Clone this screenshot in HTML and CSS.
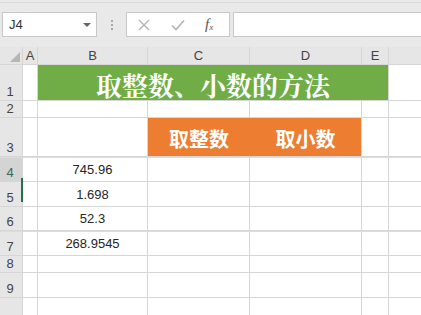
FILE: index.html
```html
<!DOCTYPE html>
<html lang="zh-CN">
  <head>
    <meta charset="UTF-8">
    <title>取整数、小数的方法</title>
    <link rel="stylesheet" href="styles.css">
  </head>
  <body>
    <div class="formula-bar">
      <div class="name-box"><span>J4</span><span class="caret"></span></div>
      <div class="grip"><i></i><i></i><i></i></div>
      <div class="fx-buttons">
        <svg class="cancel" width="12" height="12" viewBox="0 0 12 12"><path d="M1 1L11 11M11 1L1 11" stroke="#b4b4b4" stroke-width="1.4" fill="none"/></svg>
        <svg class="enter" width="14" height="12" viewBox="0 0 14 12"><path d="M1 6.5L5 10.5L13 1.5" stroke="#b4b4b4" stroke-width="1.6" fill="none"/></svg>
        <span class="fx">f<sub>x</sub></span>
      </div>
      <div class="formula-input"></div>
    </div>

    <div class="sheet">
      <div class="corner"><span class="tri"></span></div>
      <div class="ch">A</div><div class="ch">B</div><div class="ch">C</div><div class="ch">D</div><div class="ch">E</div><div class="ch"></div>

      <div class="rh">1</div><div class="cell"></div>
      <div class="title">取整数、小数的方法</div>
      <div class="cell"></div>

      <div class="rh">2</div><div class="cell"></div><div class="cell"></div><div class="cell"></div><div class="cell"></div><div class="cell"></div><div class="cell"></div>

      <div class="rh">3</div><div class="cell"></div><div class="cell"></div>
      <div class="heads"><span>取整数</span><span>取小数</span></div>
      <div class="cell"></div><div class="cell"></div>

      <div class="rh sel split">4</div><div class="cell split"></div><div class="cell num split">745.96</div><div class="cell split"></div><div class="cell split"></div><div class="cell split"></div><div class="cell split"></div>

      <div class="rh">5</div><div class="cell"></div><div class="cell num">1.698</div><div class="cell"></div><div class="cell"></div><div class="cell"></div><div class="cell"></div>

      <div class="rh">6</div><div class="cell"></div><div class="cell num">52.3</div><div class="cell"></div><div class="cell"></div><div class="cell"></div><div class="cell"></div>

      <div class="rh split">7</div><div class="cell split"></div><div class="cell num split">268.9545</div><div class="cell split"></div><div class="cell split"></div><div class="cell split"></div><div class="cell split"></div>

      <div class="rh">8</div><div class="cell"></div><div class="cell"></div><div class="cell"></div><div class="cell"></div><div class="cell"></div><div class="cell"></div>

      <div class="rh">9</div><div class="cell"></div><div class="cell"></div><div class="cell"></div><div class="cell"></div><div class="cell"></div><div class="cell"></div>

      <div class="rh">10</div><div class="cell"></div><div class="cell"></div><div class="cell"></div><div class="cell"></div><div class="cell"></div><div class="cell"></div>
    </div>

    <div class="active-edge"></div>
  </body>
</html>
```

FILE: styles.css
```css
body {
  margin: 0;
  width: 421px;
  height: 315px;
  overflow: hidden;
  position: relative;
  background: #fff;
  font-family: "Liberation Sans", Arial, sans-serif;
}

/* formula bar */

.formula-bar {
  height: 47px;
  box-sizing: border-box;
  display: flex;
  align-items: flex-start;
  background: #e9e9e9;
  box-shadow: inset 0 2px 0 #e9e9e9, inset 0 3px 0 #d9d9d9;
}

.name-box {
  width: 95px;
  height: 25px;
  margin: 12px 0 0 2px;
  box-sizing: border-box;
  border: 1px solid #c8c8c8;
  background: #fff;
  display: flex;
  align-items: center;
  justify-content: space-between;
  padding: 0 5px 0 6px;
  font-size: 13px;
  color: #333;
}

.caret {
  width: 0;
  height: 0;
  border-left: 4px solid transparent;
  border-right: 4px solid transparent;
  border-top: 4px solid #666;
}

.grip {
  width: 29px;
  height: 25px;
  margin-top: 12px;
  display: flex;
  flex-direction: column;
  align-items: center;
  justify-content: center;
  gap: 2px;
}

.grip i {
  width: 2px;
  height: 2px;
  background: #a8a8a8;
}

.fx-buttons {
  width: 104px;
  height: 25px;
  margin-top: 12px;
  box-sizing: border-box;
  border: 1px solid #c8c8c8;
  background: #fff;
  display: flex;
  align-items: center;
  position: relative;
}

.cancel {
  margin-left: 11px;
}

.enter {
  margin-left: 21px;
}

.fx {
  margin-left: 20px;
  font-family: "Liberation Serif", serif;
  font-style: italic;
  font-size: 15px;
  color: #555;
}

.fx sub {
  font-size: 9px;
  vertical-align: -1px;
}

.formula-input {
  flex: 1;
  height: 25px;
  margin: 12px -3px 0 3px;
  box-sizing: border-box;
  border: 1px solid #c8c8c8;
  background: #fff;
}

/* grid */

.sheet {
  display: grid;
  grid-template-columns: 22px 14px 109px 101px 111px 26px 40px;
  grid-template-rows: 17px 35px 16px 38px 24px 24px 23px 24px 16px 24px 30px;
  gap: 1px;
  background: #d6d6d6;
}

.cell {
  background: #fff;
}

.corner {
  background: #e6e6e6;
  display: flex;
  align-items: flex-end;
  justify-content: flex-end;
  padding: 0 2px 2px 0;
}

.tri {
  width: 0;
  height: 0;
  border-left: 10px solid transparent;
  border-bottom: 10px solid #b6b6b6;
}

.ch,
.rh {
  background: #e6e6e6;
  color: #444;
  font-size: 13px;
  line-height: 1;
  display: flex;
  align-items: flex-end;
  justify-content: center;
}

.ch {
  padding-bottom: 2px;
}

.rh {
  padding: 0 2px 2px 0;
}

.rh.sel {
  background: #d4d4d4;
  color: #2f6a57;
}

.split {
  box-shadow: inset 0 1px 0 #dcdcdc;
}

.num {
  display: flex;
  align-items: center;
  justify-content: center;
  font-size: 13px;
  color: #262626;
}

.title {
  grid-column: 3 / 7;
  background: #70ad47;
  color: #fff;
  font-family: "Noto Serif CJK SC", "Noto Sans CJK SC", serif;
  font-weight: 700;
  font-size: 26px;
  display: flex;
  align-items: center;
  justify-content: center;
  padding-top: 3px;
}

.heads {
  grid-column: 4 / 6;
  background: #ed7d31;
  display: grid;
  grid-template-columns: 102px 1fr;
  color: #fff;
  font-family: "Noto Sans CJK SC", sans-serif;
  font-weight: 700;
  font-size: 20px;
}

.heads span {
  display: flex;
  align-items: center;
  justify-content: center;
  padding-top: 2px;
}

.active-edge {
  position: absolute;
  left: 21px;
  top: 178px;
  width: 2px;
  height: 24px;
  background: #217346;
}
```
